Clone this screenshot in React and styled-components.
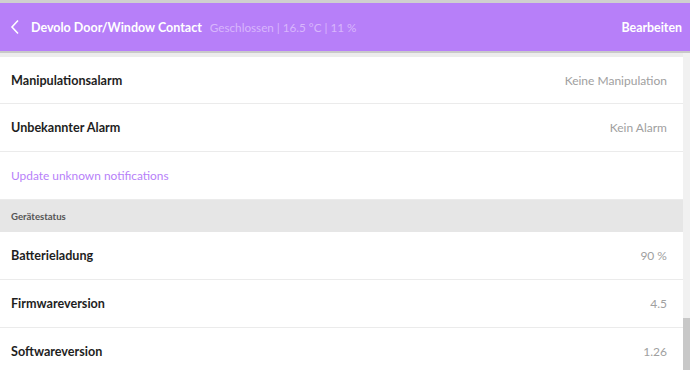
import React from "react";
import styled, { createGlobalStyle } from "styled-components";

const Global = createGlobalStyle`
  html, body { margin: 0; padding: 0; background: #fff; }
  body { font-family: Lato, "Open Sans", sans-serif; }
`;

const Page = styled.div`
  width: 690px;
  height: 370px;
  display: flex;
  flex-direction: column;
  overflow: hidden;
  background: #fff;
`;

const TopEdge = styled.div`
  height: 3px;
  background: #cfcfcf;
  flex-shrink: 0;
`;

const Header = styled.header`
  height: 48px;
  flex-shrink: 0;
  background: #b77ff9;
  display: flex;
  align-items: center;
  padding: 0 8px 0 10px;
  color: #fff;
  border-bottom: 2px solid #c9c9c9;
`;

const Back = styled.button`
  border: 0;
  background: none;
  padding: 0;
  margin-right: 11px;
  display: flex;
  align-items: center;
  color: #fff;
`;

const Title = styled.span`
  font-size: 12.5px;
  font-weight: 700;
  margin-right: 8px;
`;

const Status = styled.span`
  font-size: 11.7px;
  color: #d7b6fc;
  flex: 1;
`;

const Edit = styled.span`
  font-size: 12.4px;
  font-weight: 700;
`;

const Body = styled.div`
  flex: 1;
  display: flex;
  min-height: 0;
`;

const Content = styled.div`
  flex: 1;
  display: flex;
  flex-direction: column;
  border-top: 4px solid #ececec;
`;

const Row = styled.div`
  height: ${(p) => p.$h || 48}px;
  flex-shrink: 0;
  display: flex;
  align-items: center;
  justify-content: space-between;
  padding: 0 16px 0 11px;
  border-bottom: 1px solid #ebebeb;
  box-sizing: border-box;
`;

const Label = styled.span`
  font-size: 12.6px;
  font-weight: 700;
  color: #1e1e1e;
`;

const Value = styled.span`
  font-size: 12px;
  color: #a0a0a0;
`;

const Link = styled.span`
  font-size: 11.9px;
  color: #b77ff9;
`;

const Section = styled.div`
  height: 32px;
  flex-shrink: 0;
  background: #e6e6e6;
  display: flex;
  align-items: center;
  padding-left: 11px;
  font-size: 9.6px;
  font-weight: 700;
  color: #555;
`;

const Scrollbar = styled.div`
  width: 7px;
  background: #f1f1f1;
  display: flex;
  flex-direction: column;
  justify-content: flex-end;
`;

const Thumb = styled.div`
  height: 52px;
  background: #c8c8c8;
`;

export default function App() {
  return (
    <Page>
      <Global />
      <TopEdge />
      <Header>
        <Back aria-label="Zurück">
          <svg width="10" height="16" viewBox="0 0 10 16">
            <path d="M8 1.5 L2 8 L8 14.5" fill="none" stroke="#fff" strokeWidth="1.6" />
          </svg>
        </Back>
        <Title>Devolo Door/Window Contact</Title>
        <Status>Geschlossen | 16.5 °C | 11 %</Status>
        <Edit>Bearbeiten</Edit>
      </Header>
      <Body>
        <Content>
          <Row $h={47}>
            <Label>Manipulationsalarm</Label>
            <Value>Keine Manipulation</Value>
          </Row>
          <Row>
            <Label>Unbekannter Alarm</Label>
            <Value>Kein Alarm</Value>
          </Row>
          <Row>
            <Link>Update unknown notifications</Link>
          </Row>
          <Section>Gerätestatus</Section>
          <Row>
            <Label>Batterieladung</Label>
            <Value>90 %</Value>
          </Row>
          <Row>
            <Label>Firmwareversion</Label>
            <Value>4.5</Value>
          </Row>
          <Row>
            <Label>Softwareversion</Label>
            <Value>1.26</Value>
          </Row>
        </Content>
        <Scrollbar>
          <Thumb />
        </Scrollbar>
      </Body>
    </Page>
  );
}
